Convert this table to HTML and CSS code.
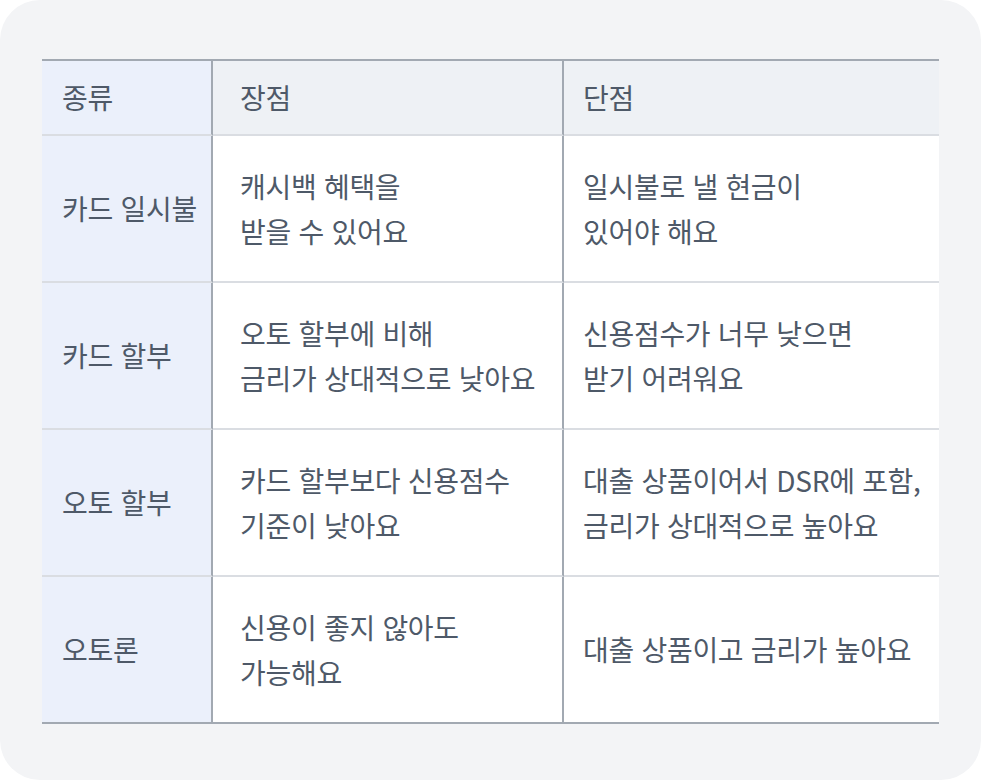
FILE: index.html
```html
<!DOCTYPE html>
<html lang="ko">
<head>
<meta charset="utf-8">
<link rel="stylesheet" href="styles.css">
</head>
<body>
<div class="card">
  <table class="cmp">
    <colgroup>
      <col class="c1"><col class="c2"><col class="c3">
    </colgroup>
    <thead>
      <tr>
        <th class="kind">종류</th>
        <th class="pro">장점</th>
        <th class="con">단점</th>
      </tr>
    </thead>
    <tbody>
      <tr>
        <td class="kind">카드 일시불</td>
        <td class="pro">캐시백 혜택을<br>받을 수 있어요</td>
        <td class="con">일시불로 낼 현금이<br>있어야 해요</td>
      </tr>
      <tr>
        <td class="kind">카드 할부</td>
        <td class="pro">오토 할부에 비해<br>금리가 상대적으로 낮아요</td>
        <td class="con">신용점수가 너무 낮으면<br>받기 어려워요</td>
      </tr>
      <tr>
        <td class="kind">오토 할부</td>
        <td class="pro">카드 할부보다 신용점수<br>기준이 낮아요</td>
        <td class="con">대출 상품이어서 DSR에 포함,<br>금리가 상대적으로 높아요</td>
      </tr>
      <tr>
        <td class="kind">오토론</td>
        <td class="pro">신용이 좋지 않아도<br>가능해요</td>
        <td class="con">대출 상품이고 금리가 높아요</td>
      </tr>
    </tbody>
  </table>
</div>
</body>
</html>
```
FILE: styles.css
```css
html, body {
  margin: 0;
  padding: 0;
  background: #ffffff;
}
.card {
  width: 981px;
  height: 780px;
  box-sizing: border-box;
  background: #f3f4f6;
  border-radius: 40px;
  padding: 59px 42px 0 42px;
  font-family: "Noto Sans CJK KR", "Noto Sans", sans-serif;
}
.cmp {
  width: 897px;
  table-layout: fixed;
  border-collapse: separate;
  border-spacing: 0;
  border-top: 2px solid #a2a9b2;
  border-bottom: 2px solid #a2a9b2;
  color: #4e5968;
  font-size: 28px;
  line-height: 45px;
}
.c1 { width: 171px; }
.c2 { width: 351px; }
.c3 { width: 375px; }
.cmp th, .cmp td {
  text-align: left;
  font-weight: 400;
  vertical-align: middle;
  padding: 0 2px 0 20px;
  border-bottom: 2px solid #dadde2;
  letter-spacing: -0.3px;
  white-space: nowrap;
}
.cmp tbody tr:last-child td {
  border-bottom: none;
}
.cmp th {
  height: 73px;
  background: #eef1f5;
}
.cmp td {
  height: 145px;
  background: #ffffff;
}
.cmp .kind {
  background: #ebf0fb;
  border-right: 2px solid #a2a9b2;
}
.cmp .pro {
  padding-left: 27px;
  border-right: 2px solid #a2a9b2;
}
.cmp .con {
  padding-left: 19px;
}
```
